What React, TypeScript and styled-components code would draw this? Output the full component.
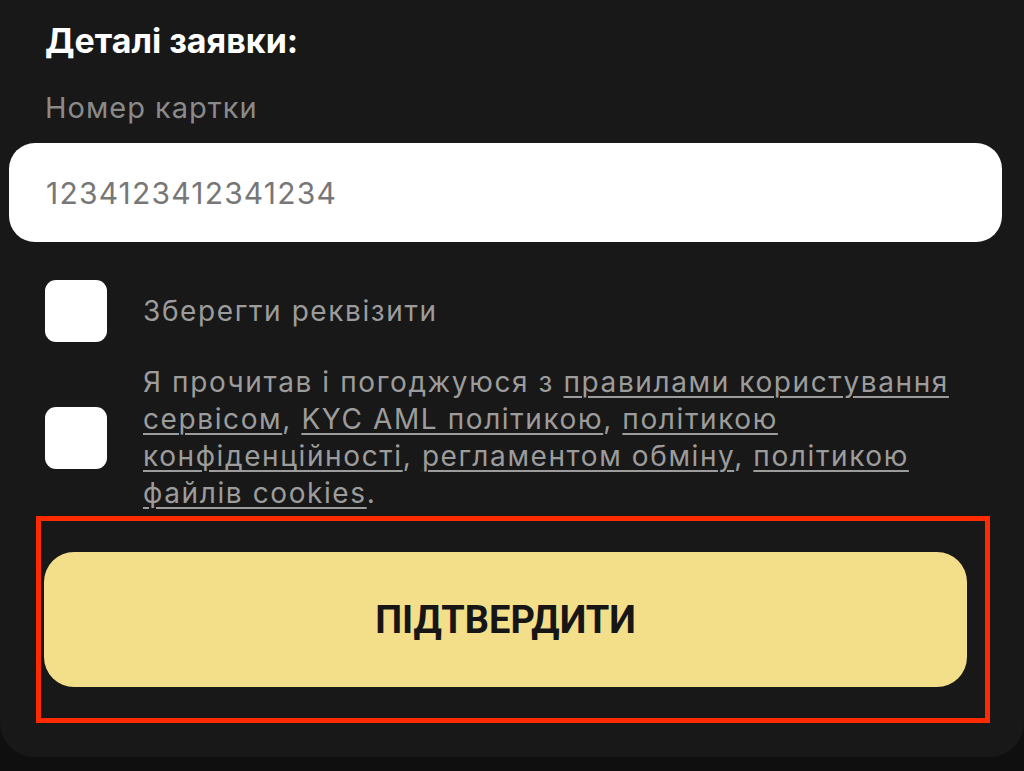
import React, { FC } from 'react';
import styled, { createGlobalStyle } from 'styled-components';

/* ─────────────────────────────── Data ─────────────────────────────── */

type Piece = { text: string; link?: boolean };

const AGREEMENT: Piece[] = [
  { text: 'Я прочитав і погоджуюся з ' },
  { text: 'правилами користування сервісом', link: true },
  { text: ', ' },
  { text: 'KYC AML політикою', link: true },
  { text: ', ' },
  { text: 'політикою конфіденційності', link: true },
  { text: ', ' },
  { text: 'регламентом обміну', link: true },
  { text: ', ' },
  { text: 'політикою файлів cookies', link: true },
  { text: '.' },
];

/* ─────────────────────────────── Component ─────────────────────────────── */

const App: FC = () => (
  <>
    <GlobalStyle />
    <Panel>
      <Title>Деталі заявки:</Title>

      <FieldLabel>Номер картки</FieldLabel>
      <CardInput defaultValue="1234123412341234" />

      <CheckRow>
        <CheckBox type="checkbox" />
        <CheckText>Зберегти реквізити</CheckText>
      </CheckRow>

      <CheckRow $gap={22}>
        <CheckBox type="checkbox" />
        <CheckText>
          {AGREEMENT.map((p, i) =>
            p.link ? (
              <DocLink key={i} href="#">
                {p.text}
              </DocLink>
            ) : (
              <span key={i}>{p.text}</span>
            ),
          )}
        </CheckText>
      </CheckRow>

      {/* highlighted area round the submit button */}
      <Highlight>
        <SubmitBtn type="button">ПІДТВЕРДИТИ</SubmitBtn>
      </Highlight>
    </Panel>
  </>
);

export default App;

/* ─────────────────────────────── Styles ─────────────────────────────── */

const GlobalStyle = createGlobalStyle`
  html, body {
    margin: 0;
    padding: 0;
    background: #0f0f0f;
  }
  body {
    font-family: Inter, "Noto Sans", sans-serif;
  }
`;

const Panel = styled.section`
  box-sizing: border-box;
  width: 1024px;
  height: 757px;
  background: #181818;
  border-radius: 0 0 34px 34px;
  padding: 21px 57px 0 45px;
  display: flex;
  flex-direction: column;
`;

const Title = styled.h2`
  margin: 0;
  font-size: 34px;
  line-height: 40px;
  font-weight: 700;
  color: #ffffff;
`;

const FieldLabel = styled.label`
  margin-top: 30px;
  font-size: 29px;
  line-height: 34px;
  letter-spacing: 1px;
  color: #8a8a8a;
`;

const CardInput = styled.input`
  box-sizing: border-box;
  margin: 18px -35px 0 -36px;
  height: 99px;
  border: none;
  outline: none;
  border-radius: 26px;
  background: #ffffff;
  padding: 0 37px;
  font-family: Inter, sans-serif;
  font-size: 30px;
  letter-spacing: 1.2px;
  color: #777777;
`;

const CheckRow = styled.div<{ $gap?: number }>`
  display: flex;
  align-items: center;
  gap: 36px;
  margin-top: ${({ $gap }) => $gap ?? 38}px;
`;

const CheckBox = styled.input`
  appearance: none;
  flex: none;
  margin: 0;
  width: 62px;
  height: 62px;
  border-radius: 11px;
  background: #ffffff;
  border: none;
`;

const CheckText = styled.span`
  font-size: 28px;
  line-height: 37px;
  letter-spacing: 1.6px;
  color: #9c9c9c;
`;

const DocLink = styled.a`
  color: #9c9c9c;
  text-decoration: underline;
  text-decoration-thickness: 2px;
  text-underline-offset: 4px;
`;

const Highlight = styled.div`
  margin: 4px -23px 0 -9px;
  padding: 31px 18px 31px 3px;
  border: 5px solid #ff2a00;
`;

const SubmitBtn = styled.button`
  display: block;
  width: 100%;
  height: 135px;
  border: none;
  border-radius: 30px;
  background: #f3de8a;
  font-family: Roboto, sans-serif;
  font-size: 38px;
  font-weight: 700;
  color: #161616;
  cursor: pointer;
`;
